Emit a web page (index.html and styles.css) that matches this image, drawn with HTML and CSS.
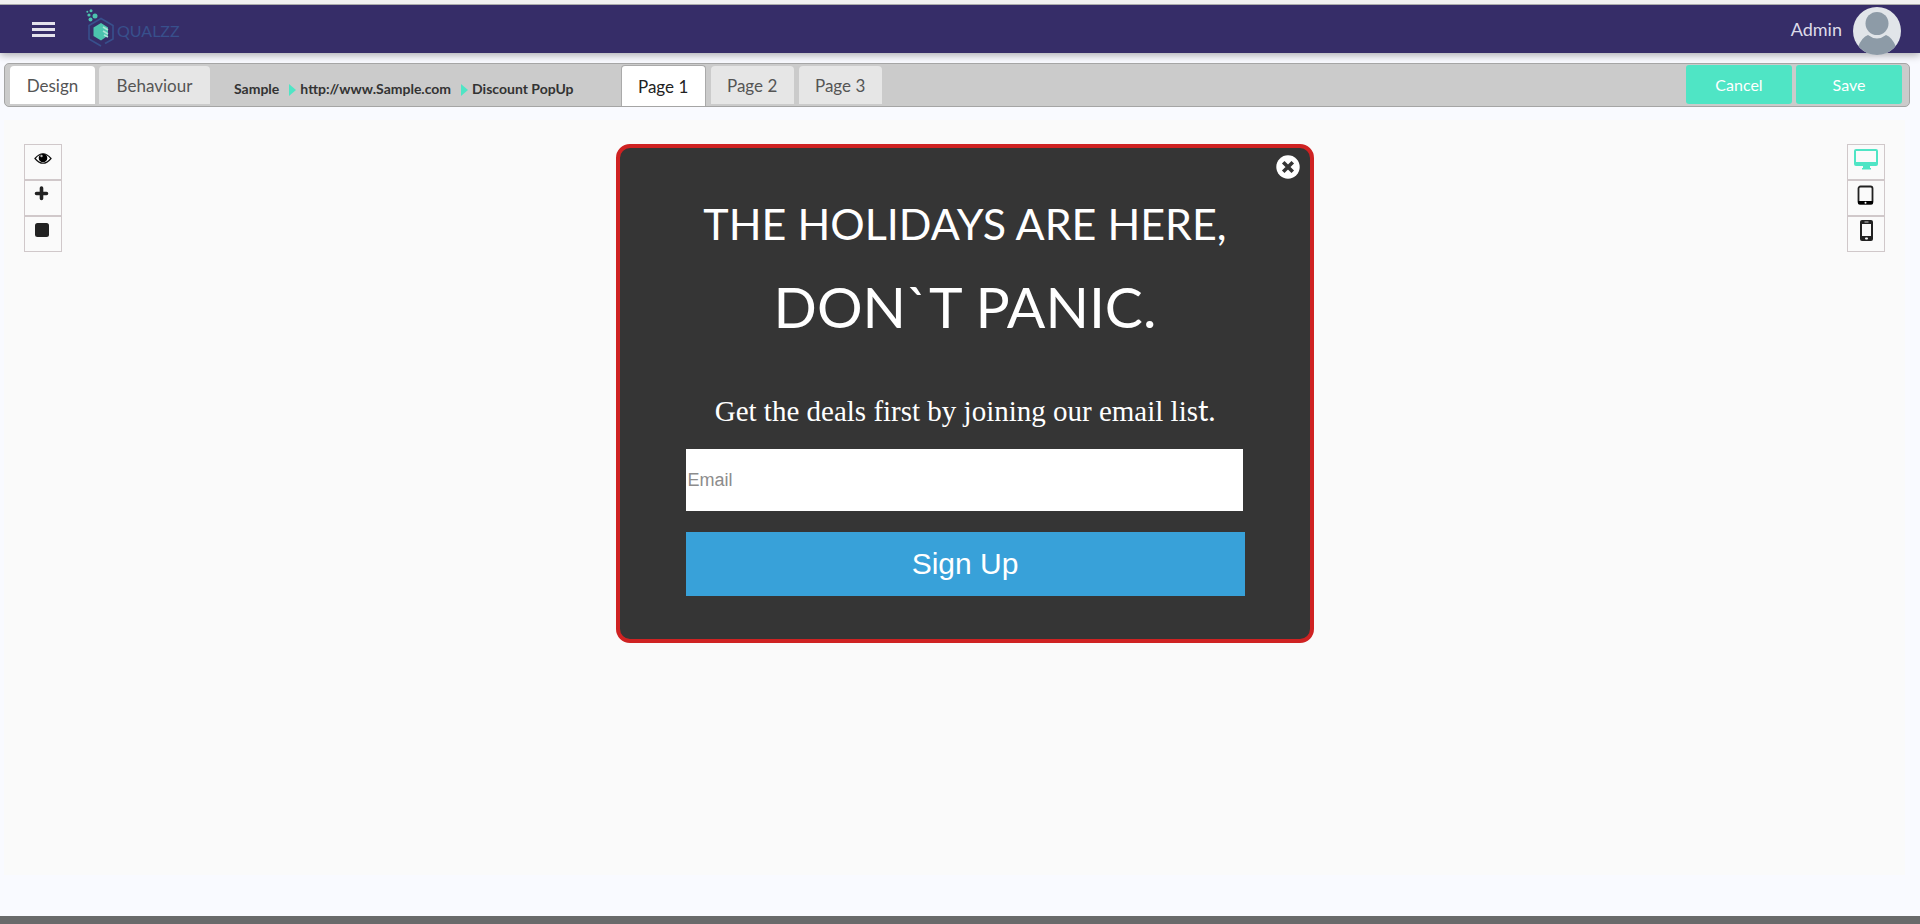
FILE: index.html
```html
<!DOCTYPE html>
<html lang="en">
<head>
<meta charset="utf-8">
<title>Qualzz - Discount PopUp</title>
<link rel="stylesheet" href="styles.css">
</head>
<body>
<header class="topbar">
  <button class="menu-button" type="button" aria-label="Menu"><span></span><span></span><span></span></button>
  <a class="brand" href="#">
    <svg class="brand-mark" viewBox="0 0 28 38" aria-hidden="true">
      <path d="M15 37 L3 30 V16.500 L15 9.500 L27 16.500 V30 L19 34.500" fill="none" stroke="#38508c" stroke-width="1.600"/>
      <path d="M15 14 L22 18.500 V26.500 L15 31.500 L7.500 27 V18.500 Z" fill="#4cc4ae"/>
      <path d="M17 18 l5 3 M17 22 l5 3 M18 26 l4 2" stroke="#a9e4d6" stroke-width="1.600"/>
      <circle cx="9" cy="7" r="2.500" fill="#4cc4ae"/><circle cx="4.500" cy="10.500" r="2" fill="#4cc4ae"/>
      <circle cx="3" cy="6" r="1.600" fill="#4cc4ae"/><circle cx="5" cy="1.800" r="1.500" fill="#4cc4ae"/><circle cx="1.300" cy="2.800" r="1" fill="#4cc4ae"/>
    </svg>
    <span>QUALZZ</span>
  </a>
  <div class="account">
    <span>Admin</span>
    <svg class="avatar" viewBox="0 0 48 48" role="img" aria-label="Admin avatar">
      <defs><clipPath id="face"><circle cx="24" cy="24" r="24"/></clipPath></defs>
      <g clip-path="url(#face)"><rect width="48" height="48" fill="#e1e5e9"/>
      <path d="M5 40 Q9 30 15 28 Q24 35 33 28 Q39 30 43 40 V48 H5 Z" fill="#8d9ba7"/>
      <circle cx="24" cy="16.500" r="11.500" fill="#8d9ba7"/></g>
    </svg>
  </div>
</header>
<nav class="toolbar">
  <div class="toolbar-start">
    <button class="tab tab-on" type="button">Design</button>
    <button class="tab tab-wide" type="button">Behaviour</button>
    <div class="crumbs"><a href="#">Sample</a><i></i><a href="#">http://www.Sample.com</a><i></i><span>Discount PopUp</span></div>
  </div>
  <div class="pages">
    <button class="tab tab-page" type="button">Page 1</button>
    <button class="tab" type="button">Page 2</button>
    <button class="tab" type="button">Page 3</button>
  </div>
  <div class="actions">
    <button class="action" type="button">Cancel</button>
    <button class="action" type="button">Save</button>
  </div>
</nav>
<main class="canvas">
  <div class="tools">
    <button type="button" aria-label="Preview"><svg viewBox="0 0 38 28"><path d="M10 13.500 Q18 4 26 13.500 Q18 23 10 13.500Z" fill="#fff" stroke="#111" stroke-width="1.200"/><circle cx="18" cy="13" r="4.300" fill="#000"/><circle cx="16.500" cy="11" r="1.200" fill="#bbb"/></svg></button>
    <button type="button" aria-label="Add"><svg viewBox="0 0 38 28"><path d="M16.500 7V17.500M11.500 12.500H21.500" stroke="#222" stroke-width="3.600" stroke-linecap="round"/></svg></button>
    <button type="button" aria-label="Shape"><svg viewBox="0 0 38 28"><rect x="10" y="6" width="14" height="14" rx="2.500" fill="#222"/></svg></button>
  </div>
  <form class="popup">
    <button class="close" type="button" aria-label="Close"><svg viewBox="0 0 24 24"><circle cx="12" cy="12" r="11.700" fill="#fff"/><path d="M8.500 8.500L15.500 15.500M15.500 8.500L8.500 15.500" stroke="#353535" stroke-width="3.600" stroke-linecap="square"/></svg></button>
    <h1>THE HOLIDAYS ARE HERE,</h1>
    <h2>DON`T PANIC.</h2>
    <p>Get the deals first by joining our email lis<span>t.</span></p>
    <input class="email" type="email" placeholder="Email" aria-label="Email">
    <button class="signup" type="button">Sign Up</button>
  </form>
  <div class="tools">
    <button type="button" aria-label="Desktop"><svg viewBox="0 0 38 28"><path fill-rule="evenodd" d="M8 4H28Q30 4 30 6V19Q30 21 28 21H22V23H23V24.500H14V23H15V21H8Q6 21 6 19V6Q6 4 8 4ZM8 6V17H28V6Z" fill="#4fe5c5"/></svg></button>
    <button type="button" aria-label="Tablet"><svg viewBox="0 0 38 28"><rect x="10.500" y="5.500" width="14" height="17" rx="2" fill="none" stroke="#222" stroke-width="1.800"/><path d="M10 20h15v2q0 1.500-1.500 1.500h-12Q10 23.500 10 22Z" fill="#000"/><circle cx="17.500" cy="21.700" r="1" fill="#fff"/></svg></button>
    <button type="button" aria-label="Phone"><svg viewBox="0 0 38 28"><rect x="12" y="3" width="13" height="21" rx="2" fill="#222"/><path d="M14 7h9v12h-9z" fill="#fafafa"/><path d="M16.500 5h4" stroke="#ccc"/><rect x="17" y="20.500" width="3" height="2" rx="1" fill="#fff"/></svg></button>
  </div>
</main>
<footer class="footer"></footer>
</body>
</html>
```
FILE: styles.css
```css
* { box-sizing: border-box; }
body {
  margin: 0;
  min-height: 100vh;
  display: flex;
  flex-direction: column;
  background: #f9faff;
  font-family: Lato, sans-serif;
}
button { padding: 0; border: 0; font-family: inherit; cursor: pointer; }
a { color: inherit; text-decoration: none; }
.topbar {
  height: 53px;
  display: flex;
  align-items: center;
  padding: 0 19px 0 32px;
  border-top: 4px solid #f0f0f0;
  background: #362d68;
  box-shadow: inset 0 1px #aaa, 0 2px 8px #0005;
}
.menu-button { display: grid; gap: 3px; width: 23px; padding-top: 2px; background: none; }
.menu-button span { height: 3px; background: #e4e2ec; }
.brand { display: flex; align-items: center; gap: 3px; margin-left: 31px; color: #38508c; font-size: 16px; }
.brand span { padding-top: 4px; }
.brand-mark { width: 28px; height: 38px; margin-bottom: 2px; }
.account { display: flex; align-items: center; gap: 11px; margin-left: auto; color: #dddbe8; font-size: 18px; }
.avatar { width: 48px; height: 48px; margin-top: 4px; }
.toolbar {
  height: 44px;
  display: grid;
  grid-template-columns: 32.4% auto 1fr;
  margin: 10px 10px 0 4px;
  padding: 0 7px 0 0;
  border: 1px solid #a5a5a5;
  border-radius: 5px;
  background: #cbcbcb;
}
.toolbar-start { display: flex; gap: 4px; padding: 2px 0 2px 5px; }
.tab {
  width: 83px;
  height: 38px;
  border-radius: 4px 4px 0 0;
  background: #e6e6e6;
  color: #555;
  font-size: 17px;
  font-weight: 400;
}
.tab-on { width: 85px; background: #fff; }
.tab-wide { width: 111px; }
.tab-page { width: 85px; height: 41px; background: #fff; color: #222; border: 1px solid #aaa; border-bottom: 0; }
.crumbs { display: flex; align-items: center; margin-left: 20px; padding-top: 7px; color: #333; font-size: 14px; font-weight: 700; white-space: nowrap; }
.crumbs i { margin: 2px 4px 0 10px; border: 6px solid transparent; border-left: 7px solid #4fe5c5; border-right: 0; }
.pages { display: flex; gap: 5px; padding: 1px 0 0 1px; }
.pages .tab { margin-top: 1px; }
.pages .tab-page { margin-top: 0; }
.actions { display: flex; justify-content: flex-end; gap: 4px; padding-top: 1px; }
.action { width: 106px; height: 39px; border-radius: 3px; background: #4fe5c5; color: #fff; font-size: 16px; }
.canvas {
  flex: 1;
  display: flex;
  justify-content: space-between;
  align-items: flex-start;
  margin: 13px 15px 41px 4px;
  padding: 24px 20px 0;
  background: #fafafa;
}
.tools { display: grid; }
.tools button { width: 38px; height: 36px; border: 1px solid #d0c8ca; background: #fafafa; }
.tools svg { display: block; width: 38px; height: 28px; margin: 0 0 6px; }
.popup {
  position: relative;
  width: 698px;
  margin: 0 0 0 20px;
  padding: 48px 65px 43px 66px;
  border: 4px solid #cf2222;
  border-radius: 14px;
  background: #353535;
  color: #fff;
  text-align: center;
}
.close { position: absolute; top: 7px; right: 10px; width: 24px; height: 24px; background: none; }
.close svg { display: block; }
h1, h2, p { margin: 0; font-weight: 400; white-space: nowrap; }
h1 { font-size: 43px; line-height: 56px; }
h2 { margin-top: 18px; font-size: 57px; line-height: 72px; }
p { margin: 50px 0 20px; font-family: "Liberation Serif", serif; font-size: 29px; line-height: 36px; }
p span { font-family: Lato, sans-serif; }
.email { display: block; width: 557px; height: 62px; padding: 0 2px; border: 0; background: #fff; font-family: "Liberation Sans", sans-serif; font-size: 18px; }
.email::placeholder { color: #8c8c8c; }
.signup { width: 100%; height: 64px; margin-top: 21px; background: #38a1d9; color: #fff; font-family: "Liberation Sans", sans-serif; font-size: 30px; }
.footer { height: 8px; background: #696a6b; }
```
